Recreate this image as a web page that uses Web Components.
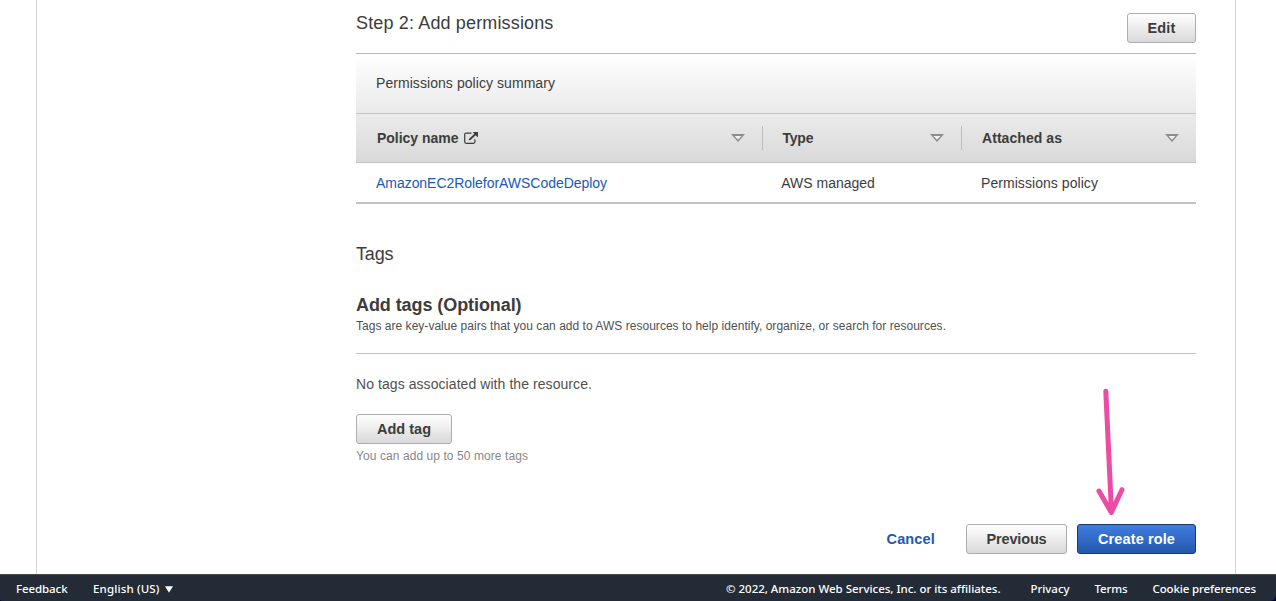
<!DOCTYPE html>
<html lang="en">
<head>
<meta charset="utf-8">
<title>Create role</title>
<style>
html,body{margin:0;height:100%;background:#fff}
body{font-family:"Liberation Sans",Arial,sans-serif;overflow:hidden}
</style>
</head>
<body>
<role-page></role-page>
<script>
const define = (name, html, extra) => {
  const t = document.createElement('template');
  t.innerHTML = html;
  customElements.define(name, class extends HTMLElement {
    constructor() { super(); this.attachShadow({mode: 'open'}).append(t.content.cloneNode(true)); }
    connectedCallback() { if (extra) extra(this); }
  });
};

/* A single line of text, tracked to the advance width given in "w". */
define('text-run', `<style>:host{display:block;white-space:nowrap;flex:none}span{display:inline-block}</style><span><slot></slot></span>`, el => {
  const w = parseFloat(el.getAttribute('w'));
  if (!w) return;
  const span = el.shadowRoot.querySelector('span');
  const n = el.textContent.length;
  span.style.letterSpacing = ((w - span.getBoundingClientRect().width) / n) + 'px';
});

define('aws-button', `<style>
:host{display:block;box-sizing:border-box;height:30px;flex:none}
button{all:unset;box-sizing:border-box;width:100%;height:100%;display:flex;justify-content:center;align-items:center;border:1px solid #adadad;border-radius:3px;background:linear-gradient(#fff,#d9d9d9);color:#3c3c3c;font-weight:700;font-size:14.5px;line-height:16px;cursor:pointer}
:host([primary]) button{background:linear-gradient(#3f7de0,#2558ac);border-color:#17396f;color:#fff}
</style><button><slot></slot></button>`);

define('sort-arrow', `<style>:host{display:block;flex:none;width:14px;height:8px}svg{display:block}</style>
<svg width="14" height="8" viewBox="0 0 14 8"><path d="M0 0h14L7 8zM3.7 2 7 5.6 10.3 2z" fill="#8c8c8c" fill-rule="evenodd"/><path d="M3.7 2 7 5.6 10.3 2z" fill="#f0f0f0"/></svg>`);

define('external-icon', `<style>:host{display:block;flex:none;width:14px;height:12px}svg{display:block}</style>
<svg width="14" height="12" viewBox="0 0 14 12" fill="none" stroke="#3c3c3c"><path d="M7.5 1.1H2.2Q.7 1.1.7 2.6v7.2q0 1.5 1.5 1.5h7.2q1.5 0 1.5-1.5V7.2" stroke-width="1.2"/><path d="M5.3 7.9 11.6 2" stroke-width="1.9"/><path d="M8.6 0H14v5.4z" fill="#3c3c3c" stroke="none"/></svg>`);

define('policy-table', `<style>
:host{display:block;font-size:14px;line-height:16px;color:#3c3c3c;border-top:1px solid #b9b9b9;border-bottom:2px solid #c3c3c3}
.summary{box-sizing:border-box;height:60px;padding:21px 20px 0;background:linear-gradient(#fff,#eaeaea);border-bottom:1px solid #c3c3c3}
.row{display:grid;grid-template-columns:406px 199px 235px;align-items:center}
.head{height:48px;background:linear-gradient(#ebebeb,#d9d9d9);border-bottom:1px solid #c3c3c3;font-weight:700}
.head>div{box-sizing:border-box;height:24px;display:flex;align-items:center;padding:0 17px 0 20px;border-left:1px solid #bdbdbd}
.head>div:first-child{border-left:0;padding-left:21px}
.head>div:nth-child(2){padding-left:19.4px}
.head sort-arrow{margin-left:auto}
.head external-icon{margin-left:5px}
.body{height:39px}
.body>*{padding-left:20px}
.body>:nth-child(2){padding-left:19.3px}
.body>:first-child{color:#2059b3}
</style>
<div class="summary"><text-run w="179">Permissions policy summary</text-run></div>
<div class="row head">
<div><text-run w="81.5">Policy name</text-run><external-icon></external-icon><sort-arrow></sort-arrow></div>
<div><text-run w="31">Type</text-run><sort-arrow></sort-arrow></div>
<div><text-run w="80">Attached as</text-run><sort-arrow></sort-arrow></div>
</div>
<div class="row body"><text-run w="231">AmazonEC2RoleforAWSCodeDeploy</text-run><text-run w="93.5">AWS managed</text-run><text-run w="117">Permissions policy</text-run></div>`);

define('tags-section', `<style>
:host{display:block;color:#505050}
h2,h3{margin:0;font-size:18px;line-height:22px;font-weight:400;color:#3c3c3c}
h2{padding-top:39px}
h3{padding-top:29px;font-weight:700}
.desc{font-size:12px;line-height:16px;padding:2px 0 19px;border-bottom:1px solid #c3c3c3}
.none{font-size:14px;line-height:16px;padding:22px 0}
aws-button{width:96px}
.hint{font-size:12px;line-height:16px;color:#888;padding-top:4px}
</style>
<h2><text-run w="37.5">Tags</text-run></h2>
<h3><text-run w="165.5">Add tags (Optional)</text-run></h3>
<div class="desc"><text-run w="590">Tags are key-value pairs that you can add to AWS resources to help identify, organize, or search for resources.</text-run></div>
<div class="none"><text-run w="236">No tags associated with the resource.</text-run></div>
<aws-button><text-run w="54">Add tag</text-run></aws-button>
<div class="hint"><text-run w="172">You can add up to 50 more tags</text-run></div>`);

define('callout-arrow', `<style>:host{display:block;pointer-events:none}svg{display:block}</style>
<svg width="32" height="132" viewBox="0 0 32 132" fill="none" stroke="#ec4ca3" stroke-linecap="round" stroke-linejoin="round"><path d="M10.8 6.3 16.5 127" stroke-width="5"/><path d="M4 106 16.3 127.5 27 104.7" stroke-width="5"/><path d="m11.5 118 5 9 4.6-9z" fill="#ec4ca3" stroke-width="2"/></svg>`);

define('wizard-actions', `<style>
:host{display:flex;justify-content:flex-end;align-items:center;position:relative;height:30px}
.cancel{color:#2059b3;font-size:14.5px;line-height:16px;font-weight:700;margin-right:31px}
.prev{width:101px;margin-right:10px}.go{width:119px}
callout-arrow{position:absolute;right:69px;top:-139px}
</style>
<text-run class="cancel" w="48.5">Cancel</text-run>
<aws-button class="prev"><text-run w="60">Previous</text-run></aws-button>
<aws-button class="go" primary><text-run w="77">Create role</text-run></aws-button>
<callout-arrow></callout-arrow>`);

define('console-footer', `<style>
:host{display:block;height:27px;background:#050038;flex:none}
.bar{box-sizing:border-box;height:27px;display:flex;align-items:center;padding:2px 20px 0 16px;background:#232b37;border-top:1px solid #444a54;border-radius:0 0 6px 2px;color:#fff;font:500 11.5px/16px "Noto Sans","Open Sans",sans-serif}
.lang{margin-left:25.5px}
svg{display:block;margin-left:5px}
.copy{margin-left:auto;margin-right:30px}
.terms{margin:0 25px}
</style><div class="bar">
<text-run w="51.5">Feedback</text-run><text-run class="lang" w="66.5">English (US)</text-run>
<svg width="8" height="7" viewBox="0 0 8 7"><path d="M0 .2h8L4 6.8z" fill="#fff"/></svg>
<text-run class="copy" w="274.5">© 2022, Amazon Web Services, Inc. or its affiliates.</text-run>
<text-run w="39">Privacy</text-run><text-run class="terms" w="33">Terms</text-run><text-run w="103.5">Cookie preferences</text-run>
</div>`);

define('role-page', `<style>
:host{display:flex;flex-direction:column;width:1276px;height:601px;overflow:hidden}
main{box-sizing:border-box;width:1200px;height:574px;margin-left:36px;padding:0 39px 0 319px;border:solid #d3d5d5;border-width:0 1px;flex:none}
.title{height:53px;display:flex;justify-content:space-between;align-items:flex-start}
h2{margin:0;font-size:18px;line-height:22px;font-weight:400;color:#3c3c3c;padding-top:12px}
.title aws-button{width:69px;margin-top:13px}
wizard-actions{margin-top:60px}
</style>
<main>
<div class="title"><h2><text-run w="197.5">Step 2: Add permissions</text-run></h2><aws-button><text-run w="28">Edit</text-run></aws-button></div>
<policy-table></policy-table>
<tags-section></tags-section>
<wizard-actions></wizard-actions>
</main>
<console-footer></console-footer>`);
</script>
</body>
</html>
